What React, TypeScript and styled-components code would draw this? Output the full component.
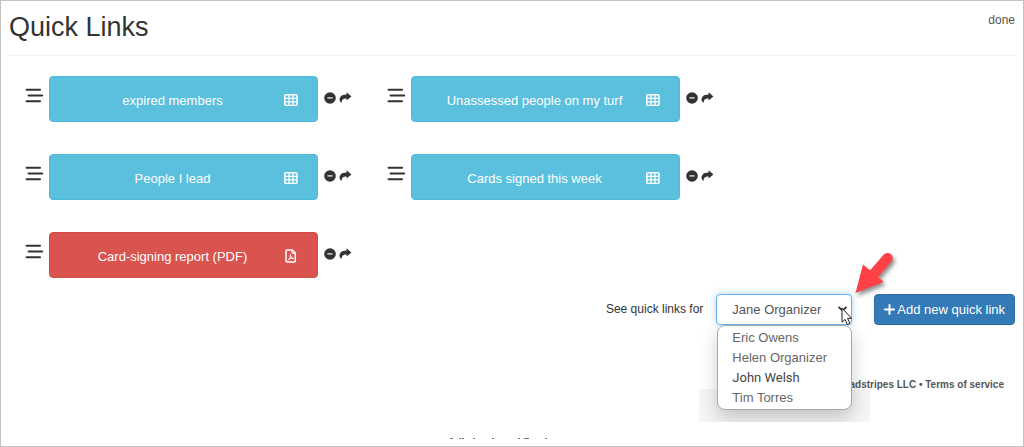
import React from "react";
import styled, { createGlobalStyle } from "styled-components";

const Global = createGlobalStyle`
  *, *::before, *::after { box-sizing: border-box; }
  html, body, #root { height: 100%; }
  body {
    margin: 0;
    background: #fff;
    color: #333;
    font-family: "Liberation Sans", Arial, sans-serif;
    font-size: 12px;
  }
  a { color: inherit; text-decoration: none; }
  button, select { font-family: inherit; }
`;

const Page = styled.div`
  min-height: 100%;
  display: flex;
  flex-direction: column;
  border: 1px solid #c3c3c3;
  padding: 0 8px;
`;

const Header = styled.header`
  display: flex;
  justify-content: space-between;
  align-items: flex-start;
  height: 55px;
  padding-top: 10px;
  border-bottom: 1px solid #f0f0f0;
`;

const Title = styled.h1`
  margin: 0;
  font-size: 27px;
  line-height: 32px;
  font-weight: 400;
`;

const DoneLink = styled.a`
  line-height: 18px;
  color: #555;
`;

const LinkGrid = styled.ul`
  display: grid;
  grid-template-columns: repeat(auto-fill, 329px);
  gap: 32px 33px;
  margin: 0;
  padding: 20px 16px 0;
  list-style: none;
`;

const LinkItem = styled.li`
  display: flex;
  align-items: flex-start;
`;

const Handle = styled.button`
  display: flex;
  width: 24px;
  padding: 12px 0 0;
  border: 0;
  background: none;
  color: #333;
`;

const QuickLink = styled.a<{ $danger?: boolean }>`
  flex: 1;
  display: flex;
  align-items: center;
  height: 46px;
  padding: 2px 19px 0 0;
  border: 1px solid ${(p) => (p.$danger ? "#d34c48" : "#50bbdb")};
  border-radius: 4px;
  background: ${(p) => (p.$danger ? "#d9534f" : "#5bc0de")};
  color: #fff;
  font-size: 13px;
`;

const LinkLabel = styled.span`
  flex: 1;
  padding-left: 11px;
  text-align: center;
`;

const Actions = styled.div`
  display: flex;
  gap: 3px;
  width: 36px;
  padding: 16px 0 0 6px;
`;

const IconButton = styled.button`
  display: flex;
  padding: 0;
  border: 0;
  background: none;
  color: #333;
`;

const Toolbar = styled.form`
  display: flex;
  justify-content: flex-end;
  align-items: center;
  margin-top: 16px;
`;

const ToolLabel = styled.label`
  margin-right: 13px;
  padding-bottom: 2px;
`;

const Picker = styled.div`
  position: relative;
  width: 136px;
  margin-right: 22px;
`;

const PersonSelect = styled.select`
  display: block;
  appearance: none;
  width: 100%;
  height: 31px;
  padding: 0 15px;
  border: 1px solid #66afe9;
  border-radius: 4px;
  outline: none;
  background: #fff;
  box-shadow: 0 0 7px rgba(102, 175, 233, 0.5);
  color: #555;
  font-size: 13px;
`;

const Chevron = styled.svg`
  position: absolute;
  top: 12px;
  right: 5px;
`;

const ShadowPatch = styled.div`
  position: absolute;
  top: 31px;
  left: -17px;
  right: -18px;
  height: 97px;
  padding: 0 18px 12px;
  overflow: hidden;
  background: linear-gradient(transparent 64px, rgba(0, 0, 0, 0.04) 64px);
`;

const Menu = styled.ul`
  height: 100%;
  margin: 0;
  padding: 2px 0 0;
  border: 1px solid #a9a9a9;
  border-radius: 8px;
  background: #fff;
  box-shadow: 0 8px 18px rgba(0, 0, 0, 0.2);
  list-style: none;
`;

const Option = styled.li<{ $active?: boolean }>`
  padding-left: 14px;
  color: ${(p) => (p.$active ? "#444" : "#666")};
  font-family: ${(p) => (p.$active ? "Roboto, sans-serif" : "inherit")};
  font-size: 13px;
  line-height: 20px;
`;

const Cursor = styled.svg`
  position: absolute;
  top: 13px;
  right: 0;
`;

const Pointer = styled.svg`
  position: absolute;
  right: -45px;
  bottom: 30px;
  filter: drop-shadow(2px 3px 2px rgba(0, 0, 0, 0.45));
`;

const AddButton = styled.button`
  display: flex;
  align-items: center;
  gap: 2px;
  height: 31px;
  padding: 0 9px;
  border: 1px solid #2e6da4;
  border-radius: 4px;
  background: #337ab7;
  color: #fff;
  font-size: 13px;
`;

const Footer = styled.footer`
  padding: 54px 11px 0 0;
  text-align: right;
  color: #555;
  font-size: 10px;
  line-height: 12px;
  font-weight: 700;
`;

const PageEnd = styled.div`
  flex: 1;
  display: flex;
  align-items: flex-end;
  justify-content: center;
  padding: 0 26px 7px 0;
`;

const HandleIcon = () => (
  <svg width="19" height="16" viewBox="0 0 19 16" stroke="currentColor" strokeWidth="2.1" strokeLinecap="round" fill="none">
    <path d="M1.6 1.8H15M3.6 7.5H17.2M1.6 13.2H15" />
  </svg>
);

const GridIcon = () => (
  <svg width="14" height="12" viewBox="0 0 14 12" aria-hidden="true">
    <rect x="0.8" y="0.8" width="12.2" height="10.6" rx="1.3" fill="none" stroke="#fff" strokeWidth="1.5" />
    <path d="M5 1V11M9 1V11M1 4.3H13M1 7.8H13" stroke="#fff" strokeWidth="1.3" />
  </svg>
);

const PdfIcon = () => (
  <svg width="14" height="14" viewBox="0 0 14 14" fill="none" stroke="#fff" aria-hidden="true">
    <path d="M3 1H8.2L11.3 4.1V12.1Q11.3 13 10.4 13H3Q2 13 2 12.1V2Q2 1 3 1Z" strokeWidth="1.5" />
    <path d="M8 1.2V4.4H11" strokeWidth="1" />
    <path d="M4 11.2C5.8 9.8 6.8 7.2 6.4 5.6C6 6.8 7.4 9.3 9.5 9.4C7.8 8.7 5.2 9.4 4 11.2Z" strokeWidth="1" />
  </svg>
);

const RemoveIcon = () => (
  <svg width="12" height="12" viewBox="0 0 12 12" aria-hidden="true">
    <circle cx="6" cy="6" r="5.8" fill="currentColor" />
    <rect x="3.4" y="5.1" width="5.2" height="1.7" rx="0.4" fill="#bbb" />
  </svg>
);

const ShareIcon = () => (
  <svg width="13" height="12" viewBox="0 0 13 12" aria-hidden="true">
    <path d="M7.6 0.2L12.4 4.4L7.6 8.6V6.4C4.4 6.2 2.8 7.4 2.4 11C0.2 9.2 0 6.8 1.3 5C2.6 3.3 4.8 2.6 7.6 2.6Z" fill="currentColor" />
  </svg>
);

const links = [
  { label: "expired members" },
  { label: "Unassessed people on my turf" },
  { label: "People I lead" },
  { label: "Cards signed this week" },
  { label: "Card-signing report (PDF)", pdf: true },
];

const people = ["Eric Owens", "Helen Organizer", "John Welsh", "Tim Torres"];

export default function App() {
  return (
    <>
      <Global />
      <Page>
        <Header>
          <Title>Quick Links</Title>
          <DoneLink href="#done">done</DoneLink>
        </Header>
        <main>
          <LinkGrid>
            {links.map(({ label, pdf }) => (
              <LinkItem key={label}>
                <Handle type="button" aria-label={`Move ${label}`}>
                  <HandleIcon />
                </Handle>
                <QuickLink href="#report" $danger={pdf}>
                  <LinkLabel>{label}</LinkLabel>
                  {pdf ? <PdfIcon /> : <GridIcon />}
                </QuickLink>
                <Actions>
                  <IconButton type="button" aria-label={`Remove ${label}`}>
                    <RemoveIcon />
                  </IconButton>
                  <IconButton type="button" aria-label={`Share ${label}`}>
                    <ShareIcon />
                  </IconButton>
                </Actions>
              </LinkItem>
            ))}
          </LinkGrid>
          <Toolbar>
            <ToolLabel htmlFor="person">See quick links for</ToolLabel>
            <Picker>
              <PersonSelect id="person" defaultValue="Jane Organizer">
                <option>Jane Organizer</option>
                {people.map((name) => (
                  <option key={name}>{name}</option>
                ))}
              </PersonSelect>
              <Chevron width="9" height="6" viewBox="0 0 9 6" fill="none" stroke="#333" strokeWidth="1.8">
                <path d="M0.5 1L4.5 4.6L8.5 1" />
              </Chevron>
              <ShadowPatch>
                <Menu>
                  {people.map((name) => (
                    <Option key={name} $active={name === "John Welsh"}>
                      {name}
                    </Option>
                  ))}
                </Menu>
              </ShadowPatch>
              <Cursor width="11" height="19" viewBox="0 0 11 19">
                <path d="M1 1V15.2L4.1 12.4L6.4 17.6L8.9 16.5L6.6 11.4H10.5Z" fill="#fff" stroke="#222" strokeWidth="1" />
              </Cursor>
              <Pointer width="42" height="44" viewBox="0 0 42 44">
                <path d="M0.5 42L8 13.5L15 19.6L28.8 3.6A5.2 5.2 0 0 1 36.8 10.2L23 26L28.6 31Z" fill="#fe4144" />
              </Pointer>
            </Picker>
            <AddButton type="button">
              <svg width="11" height="11" viewBox="0 0 11 11" stroke="#fff" strokeWidth="2" strokeLinecap="round" aria-hidden="true">
                <path d="M5.5 1V10M1 5.5H10" />
              </svg>
              Add new quick link
            </AddButton>
          </Toolbar>
        </main>
        <Footer>
          Broadstripes LLC • <a href="#terms">Terms of service</a>
        </Footer>
        <PageEnd>
          <svg width="98" height="1" viewBox="0 0 98 1" aria-hidden="true">
            <path d="M0 .5h3M9 .5h2M12 .5h2M23 .5h2M42 .5h2M68 .5h2M74 .5h5M95 .5h2" stroke="#777" />
          </svg>
        </PageEnd>
      </Page>
    </>
  );
}
